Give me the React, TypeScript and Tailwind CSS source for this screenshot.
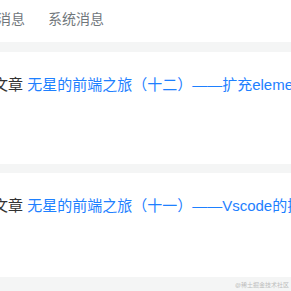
export default function App() {
  const items = [
    { title: "无星的前端之旅（十二）——扩充element-ui组件", h: "h-[112px]" },
    { title: "无星的前端之旅（十一）——Vscode的插件推荐", h: "h-[104px]" },
  ];

  return (
    <div
      className="w-[291px] h-[291px] overflow-hidden bg-[#f4f5f5] relative"
      style={{ fontFamily: '"Liberation Sans", "Noto Sans CJK SC", sans-serif' }}
    >
      {/* tabs */}
      <div className="h-[42px] bg-white flex items-center pb-[4px] gap-[23px] -ml-[3px] whitespace-nowrap text-[14px] text-[#71777c]">
        <span>消息</span>
        <span>系统消息</span>
      </div>

      <div className="flex flex-col gap-[9px] pt-[10px]">
        {items.map((item) => (
          <div key={item.title} className={`${item.h} bg-white overflow-hidden`}>
            <div className="pt-[23px] -ml-[7px] whitespace-nowrap text-[15px] leading-[20px]">
              <span className="text-[#333]">文章 </span>
              <a className="text-[#1e80ff]">{item.title}</a>
            </div>
          </div>
        ))}
      </div>

      <div className="absolute right-[2px] bottom-[3px] text-[6px] leading-none text-[#bdbdbd]">
        @稀土掘金技术社区
      </div>
    </div>
  );
}
